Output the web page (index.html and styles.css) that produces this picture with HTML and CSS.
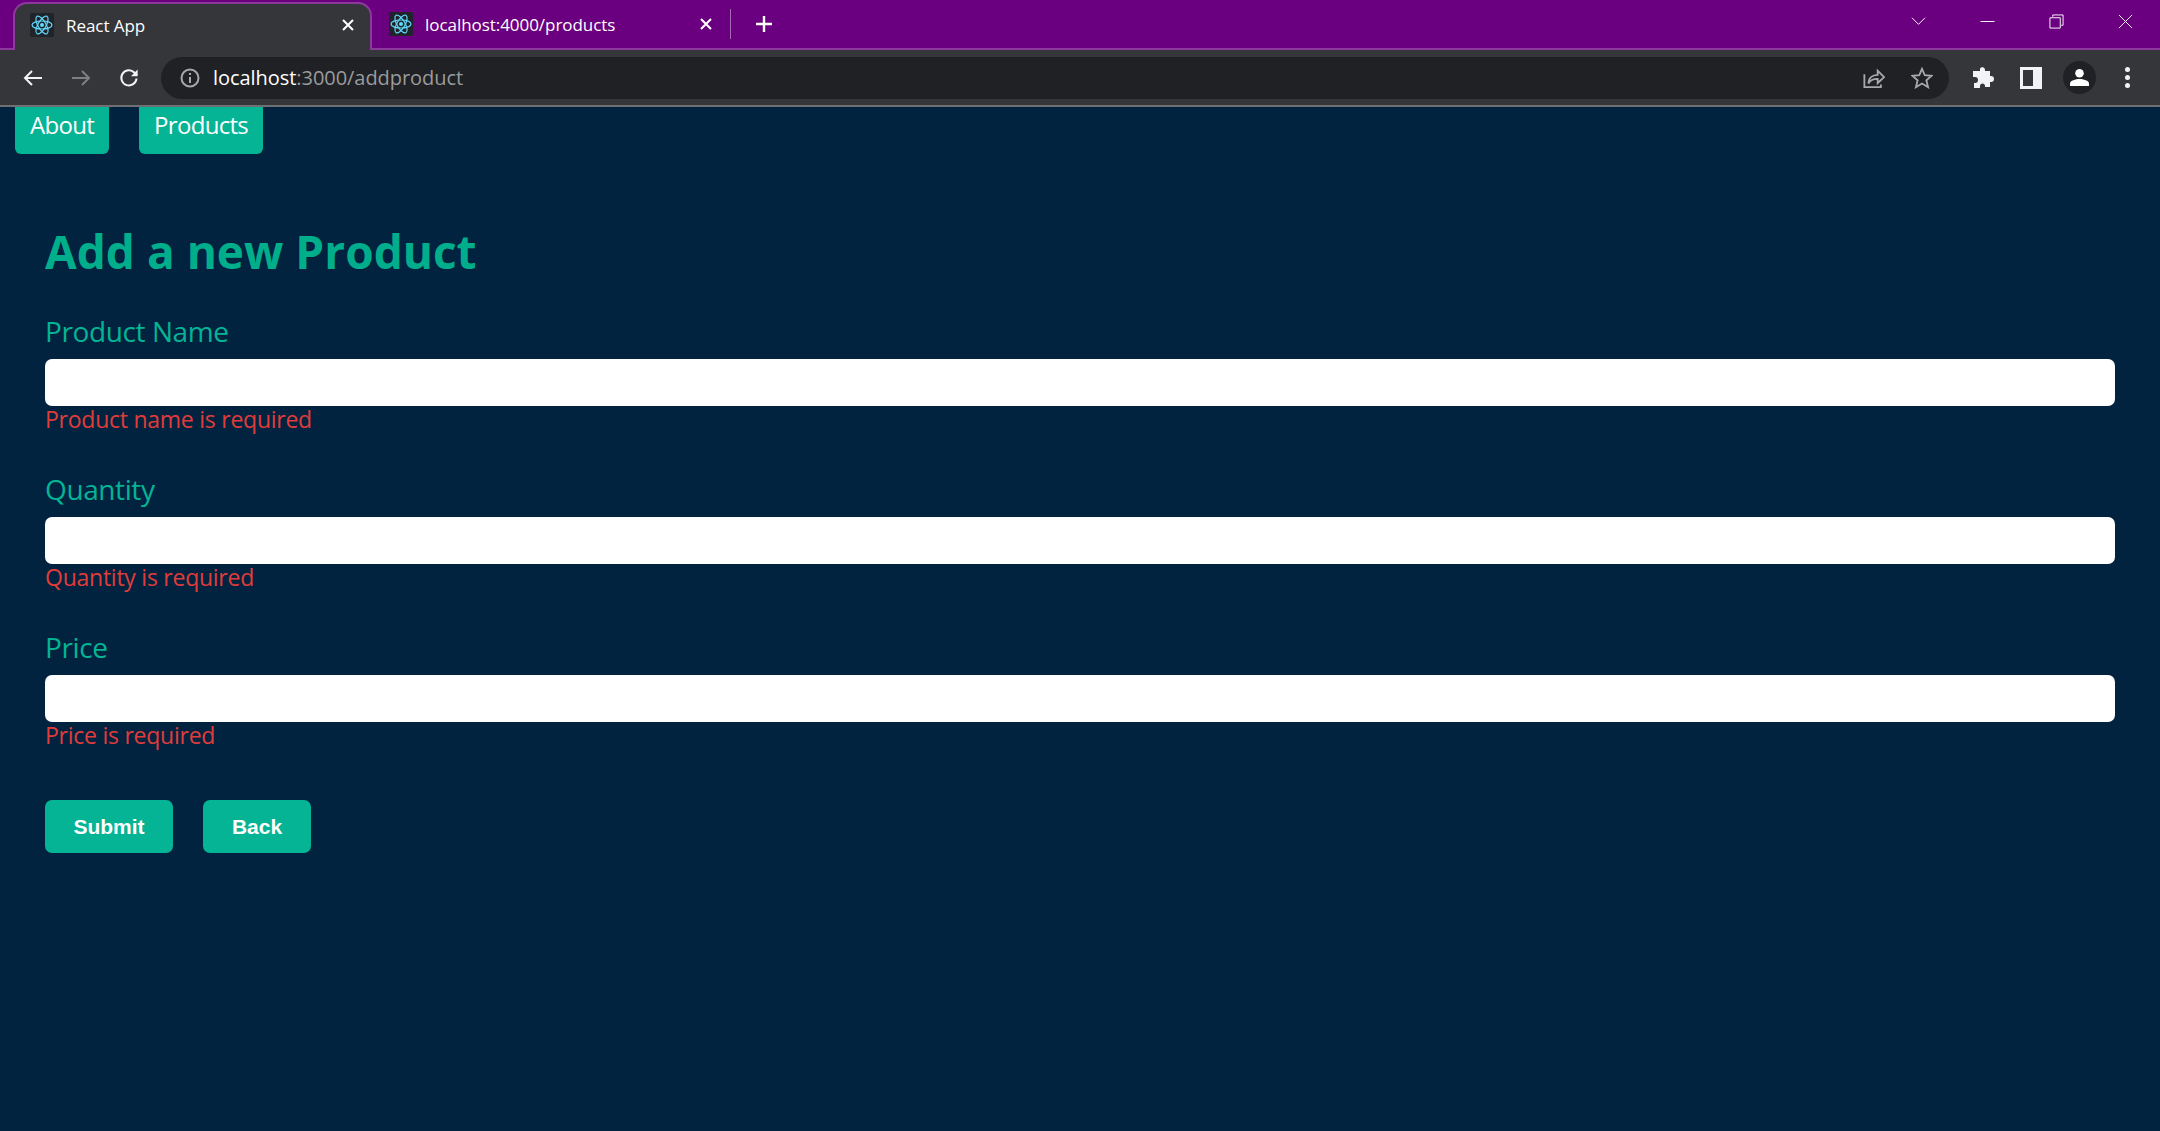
FILE: index.html
```html
<!DOCTYPE html>
<html lang="en">

<head>
    <meta charset="UTF-8">
    <meta name="viewport" content="width=device-width, initial-scale=1.0">
    <title>React App</title>
    <link rel="stylesheet" href="styles.css">
</head>

<body>
    <svg class="defs" width="0" height="0">
        <symbol id="react" viewBox="0 0 24 24">
            <rect width="24" height="24" rx="2" fill="#20232a" />
            <g fill="none" stroke="#61dafb" stroke-width="1.2">
                <ellipse cx="12" cy="12" rx="10" ry="4" />
                <ellipse cx="12" cy="12" rx="10" ry="4" transform="rotate(60 12 12)" />
                <ellipse cx="12" cy="12" rx="10" ry="4" transform="rotate(120 12 12)" />
            </g>
            <circle cx="12" cy="12" r="2" fill="#61dafb" />
        </symbol>
    </svg>

    <div class="tabstrip">
        <div class="tab tab-active">
            <svg class="favicon"><use href="#react" /></svg>
            <span class="tab-title">React App</span>
            <svg class="tab-close" viewBox="0 0 12 12"><path d="M1 1l10 10M11 1L1 11" /></svg>
        </div>
        <div class="tab tab-other">
            <svg class="favicon"><use href="#react" /></svg>
            <span class="tab-title">localhost:4000/products</span>
            <svg class="tab-close" viewBox="0 0 12 12"><path d="M1 1l10 10M11 1L1 11" /></svg>
        </div>
        <div class="tab-sep"></div>
        <svg class="new-tab" viewBox="0 0 18 18"><path d="M9 1v16M1 9h16" /></svg>
        <div class="window-controls">
            <svg class="win-icon" viewBox="0 0 16 16"><path d="M1 4l7 7 7-7" /></svg>
            <svg class="win-icon" viewBox="0 0 16 16"><path d="M0.5 8h15" /></svg>
            <svg class="win-icon" viewBox="0 0 16 16"><path d="M4 3V1h11v11h-2M1 4h11v11H1z" /></svg>
            <svg class="win-icon" viewBox="0 0 16 16"><path d="M1 1l14 14M15 1L1 15" /></svg>
        </div>
    </div>

    <div class="toolbar">
        <svg class="nav-icon" viewBox="0 0 24 24"><path d="M21 12H4M11 5l-7 7 7 7" /></svg>
        <svg class="nav-icon nav-disabled" viewBox="0 0 24 24"><path d="M3 12h17M13 5l7 7-7 7" /></svg>
        <svg class="nav-icon" viewBox="0 0 24 24"><path d="M19.5 12.5a7.6 7.6 0 1 1-2.2-6L20 9" /><path class="solid" d="M20.6 3.6v6.6H14z" /></svg>
        <div class="omnibox">
            <svg class="info-icon" viewBox="0 0 20 20">
                <circle cx="10" cy="10" r="8.5" />
                <path d="M10 9v6M10 5v2" />
            </svg>
            <span class="url"><span class="url-host">localhost</span>:3000/addproduct</span>
            <svg class="omni-icon share-icon" viewBox="0 0 24 24"><path d="M1.5 8v14h18v-3M6 18c0-6 4-9.500 10-9.500V4l7 7-7 6.500v-4.500c-4 0-8 1-10 5z" /></svg>
            <svg class="omni-icon star-icon" viewBox="0 0 24 24"><path d="M12 2l3 7 7.500.6-5.700 5 1.800 7.400-6.600-4-6.600 4 1.800-7.400-5.700-5L9 9z" /></svg>
        </div>
        <svg class="tool-icon puzzle" viewBox="0 0 22 22"><path d="M8 1.500a2.700 2.700 0 0 1 5 1.500v1h5v5h1a2.800 2.800 0 0 1 0 6h-1v5h-5v-1.500a2.600 2.600 0 0 0-5 0V21H2v-5h1a2.900 2.900 0 0 0 0-6H1V4h7z" /></svg>
        <svg class="tool-icon panel" viewBox="0 0 22 22"><path fill-rule="evenodd" d="M0 0h22v22H0zM3 3v16h10V3z" /></svg>
        <div class="avatar">
            <svg viewBox="0 0 20 20"><circle cx="10" cy="5.500" r="4.500" /><path d="M0 19v-2.500C0 13 6 11.500 10 11.500s10 1.500 10 5V19z" /></svg>
        </div>
        <div class="dots"><i></i><i></i><i></i></div>
    </div>

    <div class="page">
        <nav class="topnav">
            <a class="nav-btn">About</a>
            <a class="nav-btn">Products</a>
        </nav>

        <form class="product-form">
            <h1>Add a new Product</h1>

            <div class="field">
                <label>Product Name</label>
                <input type="text">
                <p class="error">Product name is required</p>
            </div>
            <div class="field">
                <label>Quantity</label>
                <input type="text">
                <p class="error">Quantity is required</p>
            </div>
            <div class="field">
                <label>Price</label>
                <input type="text">
                <p class="error">Price is required</p>
            </div>

            <div class="actions">
                <button type="button" class="btn-submit">Submit</button>
                <button type="button" class="btn-back">Back</button>
            </div>
        </form>
    </div>
</body>

</html>
```

FILE: styles.css
```css
* {
    box-sizing: border-box;
}

html,
body {
    margin: 0;
    height: 100%;
}

body {
    display: flex;
    flex-direction: column;
    height: 1131px;
    overflow: hidden;
    font-family: "Open Sans", sans-serif;
    background-color: #012340;
}

.defs {
    display: none;
}

/* browser tabs */
.tabstrip {
    display: flex;
    align-items: flex-end;
    height: 50px;
    padding-left: 13px;
    background-color: #6a007f;
    border-bottom: 2px solid #8b3a9c;
}

.tab {
    display: flex;
    align-items: center;
    height: 48px;
    color: #fff;
    font-size: 17px;
    letter-spacing: -0.05px;
}

.tab-active {
    width: 359px;
    margin-bottom: -2px;
    padding: 0 16px 4px 15px;
    background-color: #35363a;
    border: 2px solid #8b3a9c;
    border-bottom: none;
    border-radius: 14px 14px 0 0;
}

.tab-other {
    width: 358px;
    padding: 0 18px 0 17px;
}

.favicon {
    width: 24px;
    height: 24px;
    flex-shrink: 0;
}

.tab-title {
    flex: 1;
    margin-left: 12px;
}

.tab-close {
    width: 12px;
    height: 12px;
    fill: none;
    stroke: #fff;
    stroke-width: 2;
}

.tab-sep {
    align-self: center;
    width: 1px;
    height: 30px;
    background-color: #a86bb5;
}

.new-tab {
    align-self: center;
    width: 18px;
    height: 18px;
    margin-left: 24px;
    fill: none;
    stroke: #fff;
    stroke-width: 2.4;
}

.window-controls {
    display: flex;
    align-self: flex-start;
    gap: 54px;
    margin-left: auto;
    margin-right: 27px;
    padding-top: 14px;
}

.win-icon {
    width: 15px;
    height: 15px;
    fill: none;
    stroke: #fff;
    stroke-width: 1;
}

/* address bar */
.toolbar {
    display: flex;
    align-items: center;
    height: 57px;
    padding-left: 21px;
    background-color: #35363a;
    border-bottom: 2px solid #6f7073;
}

.nav-icon {
    width: 24px;
    height: 24px;
    margin-right: 24px;
    fill: none;
    stroke: #f1f3f4;
    stroke-width: 2;
}

.nav-icon .solid {
    fill: #f1f3f4;
    stroke: none;
}

.nav-disabled {
    stroke: #7e7f82;
}

.omnibox {
    display: flex;
    align-items: center;
    width: 1788px;
    height: 42px;
    margin-left: -4px;
    padding: 0 16px 0 19px;
    background-color: #202124;
    border-radius: 21px;
}

.info-icon {
    width: 20px;
    height: 20px;
    fill: none;
    stroke: #a8a9ab;
    stroke-width: 2;
}

.url {
    flex: 1;
    margin-left: 13px;
    color: #9a9b9e;
    font-size: 20px;
    letter-spacing: -0.05px;
}

.url-host {
    color: #fff;
}

.omni-icon {
    width: 22px;
    height: 22px;
    fill: none;
    stroke: #a8a9ab;
    stroke-width: 2;
}

.star-icon {
    margin-left: 26px;
}

.tool-icon {
    width: 22px;
    height: 22px;
    fill: #f1f3f4;
}

.puzzle {
    margin-left: 23px;
}

.panel {
    margin-left: 26px;
}

.avatar {
    display: flex;
    align-items: center;
    justify-content: center;
    width: 33px;
    height: 33px;
    margin-left: 21px;
    background-color: #202124;
    border-radius: 50%;
}

.avatar svg {
    width: 19px;
    height: 19px;
    fill: #fff;
}

.dots {
    display: flex;
    flex-direction: column;
    gap: 3px;
    margin-left: 29px;
}

.dots i {
    width: 5px;
    height: 5px;
    background-color: #f1f3f4;
    border-radius: 50%;
}

/* page content */
.page {
    flex: 1;
    padding: 0 45px 0 15px;
}

.topnav {
    display: flex;
    gap: 30px;
}

.nav-btn {
    height: 47px;
    padding: 0 15px;
    color: #fff;
    font-size: 24px;
    line-height: 36px;
    letter-spacing: -0.7px;
    background-color: #04b494;
    border-radius: 0 0 6px 6px;
}

.product-form {
    margin-left: 30px;
    padding-top: 67px;
}

h1 {
    margin: 0 0 31px;
    color: #00ae8c;
    font-size: 46px;
    line-height: 60px;
    letter-spacing: 0;
}

.field {
    height: 158px;
}

label {
    display: block;
    height: 47px;
    color: #04b494;
    font-size: 28px;
    line-height: 38px;
    letter-spacing: -0.4px;
}

input {
    display: block;
    width: 100%;
    height: 47px;
    background-color: #fff;
    border: none;
    border-radius: 7px;
}

.error {
    margin: 0;
    color: #e03c3a;
    font-size: 23px;
    line-height: 26px;
    letter-spacing: -0.25px;
}

.actions {
    display: flex;
    gap: 30px;
    margin-top: 14px;
}

button {
    height: 53px;
    color: #fff;
    font-family: "Liberation Sans", sans-serif;
    font-size: 21px;
    font-weight: bold;
    background-color: #04b494;
    border: none;
    border-radius: 7px;
}

.btn-submit {
    width: 128px;
}

.btn-back {
    width: 108px;
}
```
